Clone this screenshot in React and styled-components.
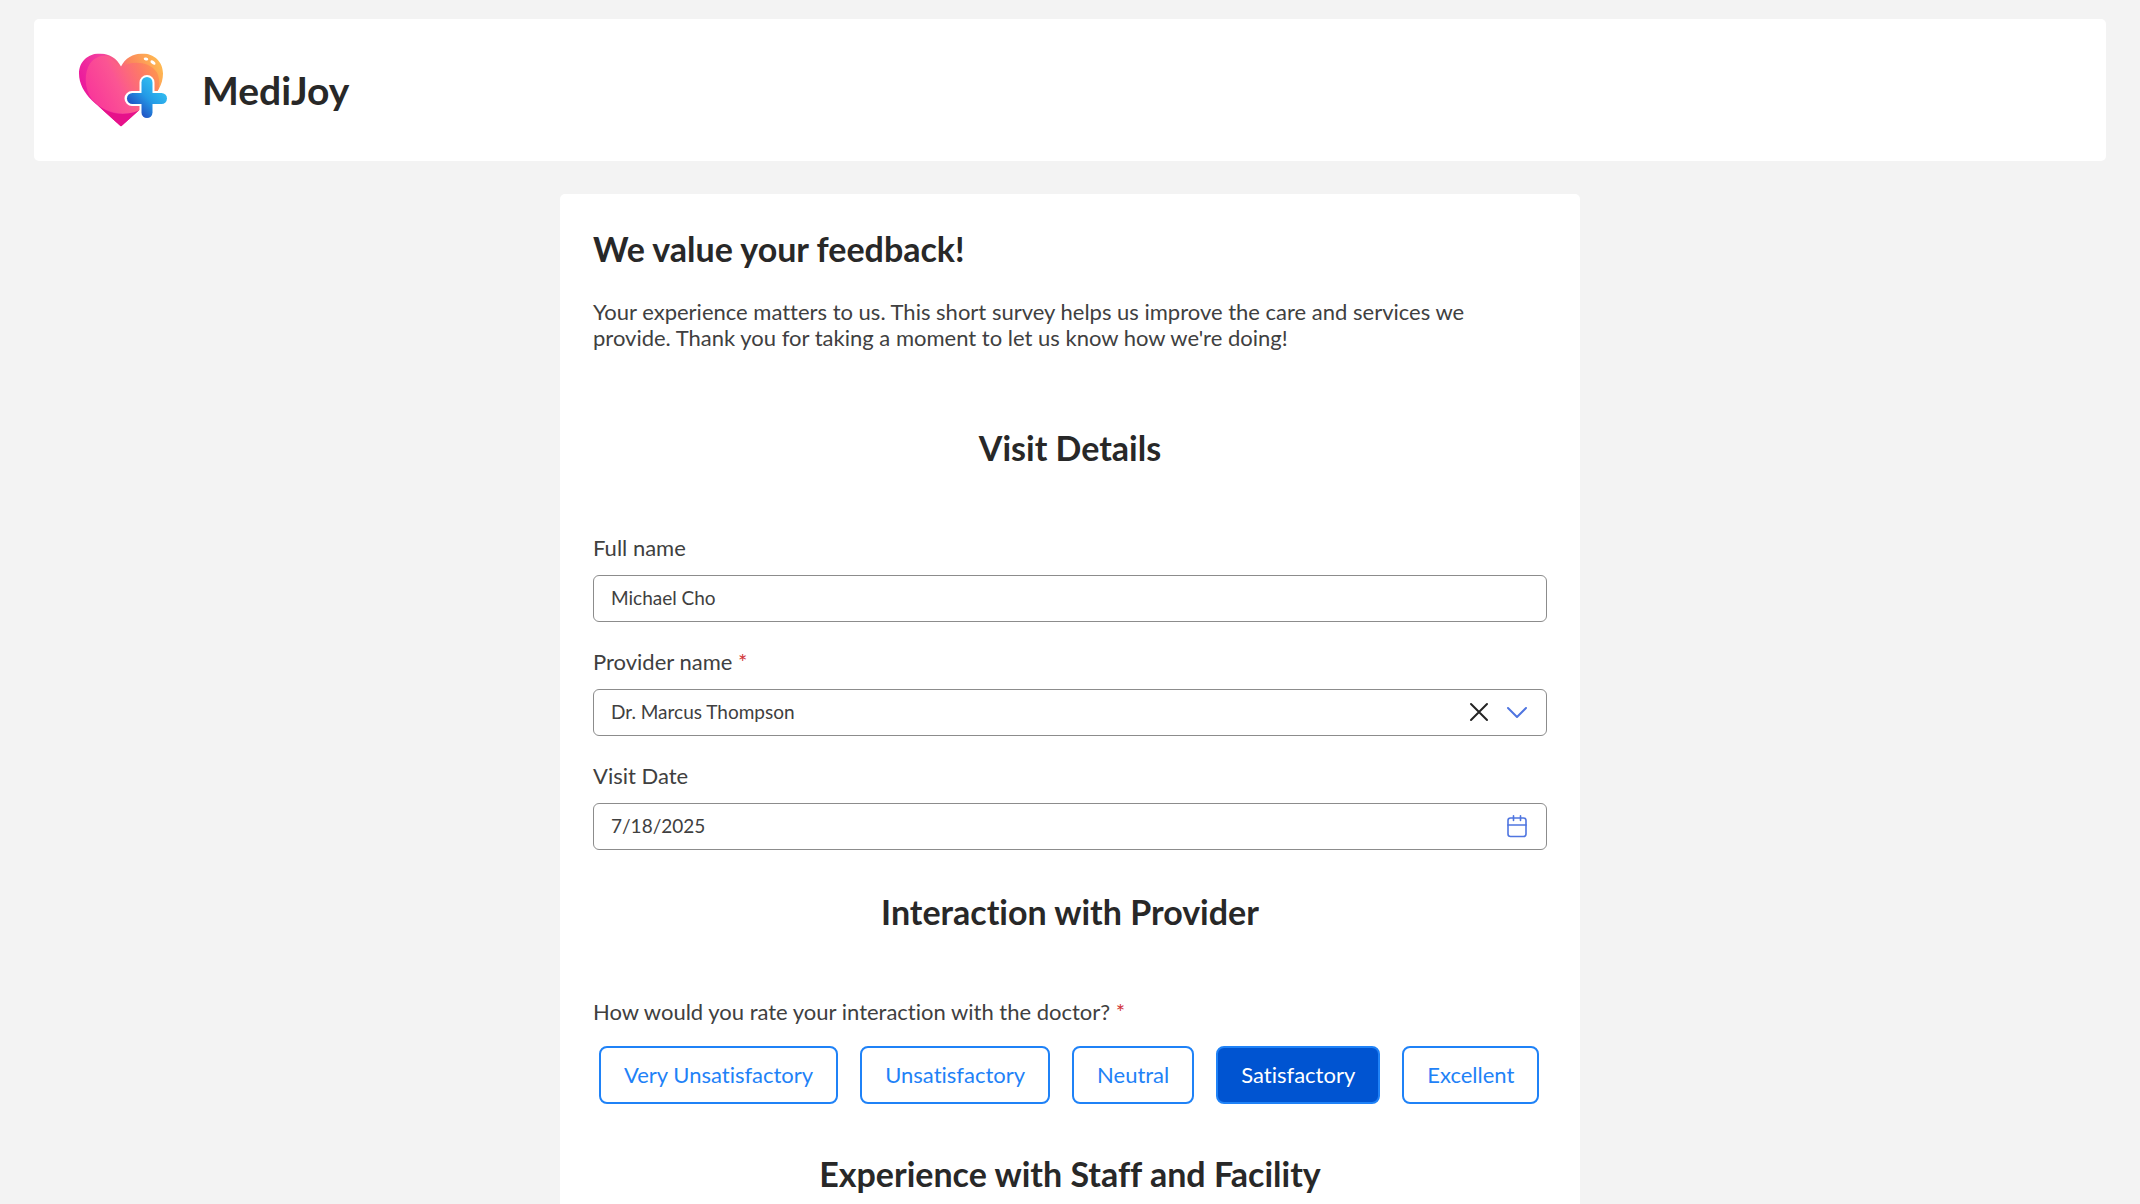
import React, {useState} from "react";
import styled, {createGlobalStyle} from "styled-components";

const GlobalStyle = createGlobalStyle`
  * {
    box-sizing: border-box;
  }

  body {
    margin: 0;
    background: #f3f3f3;
    color: #404040;
    font-family: Lato, "Liberation Sans", sans-serif;
    font-size: 22px;
    font-variant-ligatures: none;
    line-height: 26px;
  }

  button, input, select {
    font-family: inherit;
    font-variant-ligatures: inherit;
  }
`;

const Page = styled.div`
  min-height: 100vh;
  display: flex;
  flex-direction: column;
  padding: 19px 34px 0;
`;

const Header = styled.header`
  display: flex;
  align-items: center;
  gap: 32px;
  padding: 31px 44px;
  margin-bottom: 33px;
  background: #fff;
  border-radius: 5px;
`;

const Brand = styled.h1`
  margin: 0;
  color: #282828;
  font-size: 39px;
  font-weight: 700;
  line-height: 46px;
`;

const Card = styled.main`
  flex: 1;
  width: 100%;
  max-width: 1020px;
  margin: 0 auto;
  padding: 35px 33px 0;
  background: #fff;
  border-radius: 5px 5px 0 0;
`;

const Title = styled.h2`
  margin: 0 0 30px;
  color: #282828;
  font-size: 34px;
  font-weight: 700;
  line-height: 40px;
`;

const Intro = styled.p`
  max-width: 900px;
  margin: 0 0 77px;
`;

const SectionTitle = styled(Title)`
  margin-bottom: 67px;
  text-align: center;
`;

const Fields = styled.div`
  display: flex;
  flex-direction: column;
  gap: 27px;
  margin-bottom: 42px;
`;

const Label = styled.label`
  display: block;
  margin-bottom: 14px;
`;

const Required = styled.span`
  color: #d13438;
`;

const Control = styled.div`
  display: flex;
  align-items: center;
  gap: 14px;
  height: 47px;
  padding: 0 17px 2px;
  border: 1px solid #8c8c8c;
  border-radius: 6px;
`;

const Input = styled.input`
  flex: 1;
  min-width: 0;
  padding: 0;
  border: 0;
  outline: 0;
  background: none;
  color: #404040;
  font-size: 19px;
  line-height: 26px;
`;

const Select = styled(Input).attrs({as: "select"})`
  appearance: none;
`;

const IconButton = styled.button`
  display: flex;
  padding: 0;
  border: 0;
  background: none;
  color: ${({$dark}) => ($dark ? "#242424" : "#4f75e0")};
  cursor: pointer;
`;

const Rating = styled.fieldset`
  min-width: 0;
  margin: 0 0 50px;
  padding: 0;
  border: 0;
`;

const Question = styled.legend`
  padding: 0;
  margin-bottom: 21px;
`;

const Options = styled.div`
  display: flex;
  flex-wrap: wrap;
  gap: 22px;
  padding: 0 6px;
`;

const Option = styled.button`
  height: 58px;
  padding: 0 23px;
  border: 2px solid #1f82f7;
  border-radius: 8px;
  background: ${({$active}) => ($active ? "#0054d1" : "#fff")};
  color: ${({$active}) => ($active ? "#fff" : "#1f82f7")};
  font-size: 22px;
  line-height: 26px;
  cursor: pointer;
`;

const Logo = () => (
    <svg width="92" height="80" viewBox="78 49.5 92 80" aria-hidden="true">
        <defs>
            <linearGradient id="heart" x1="82" y1="100" x2="160" y2="62" gradientUnits="userSpaceOnUse">
                <stop offset="0" stopColor="#f82f9c"/>
                <stop offset=".45" stopColor="#fb5593"/>
                <stop offset=".75" stopColor="#fd7a66"/>
                <stop offset="1" stopColor="#ff9f46"/>
            </linearGradient>
            <linearGradient id="rim" x1="82" y1="100" x2="160" y2="60" gradientUnits="userSpaceOnUse">
                <stop offset="0" stopColor="#e9119b"/>
                <stop offset=".45" stopColor="#f4419f"/>
                <stop offset=".7" stopColor="#fb8a5c"/>
                <stop offset="1" stopColor="#ffbb50"/>
            </linearGradient>
            <linearGradient id="plus" x1="160" y1="82" x2="132" y2="110" gradientUnits="userSpaceOnUse">
                <stop offset="0" stopColor="#35c5f2"/>
                <stop offset=".5" stopColor="#249ae6"/>
                <stop offset="1" stopColor="#2045bd"/>
            </linearGradient>
            <clipPath id="heartShape">
                <path d="M121 126 L92 100 C84 92 79 83 79 73 C79 61 88 53 100 53 C109 53 117 58 121 66 C125 58 133 53 142 53 C154 53 163 61 163 73 C163 84 157 93 150 100 Z"/>
            </clipPath>
        </defs>
        <g clipPath="url(#heartShape)">
            <path fill="url(#rim)" d="M78 50H166V128H78Z"/>
            <path fill="url(#heart)" d="M92 99 C84 88 84 72 90 63 C95 56 103 54 109 56 L121 67 C130 60 149 60 157 72 C161 80 160 94 151 101 C143 111 128 115 114 112 C105 110 97 105 92 99Z"/>
            <path fill="#e6128a" d="M92 99 C103 113 126 119 144 107 L121 128Z"/>
        </g>
        <g fill="none" strokeLinecap="round">
            <path stroke="#fff" strokeWidth="15" d="M147 82V112M132 98H161"/>
            <path stroke="url(#plus)" strokeWidth="11" d="M147 82V112"/>
            <path stroke="url(#plus)" strokeWidth="11" d="M132.5 98H161.5"/>
        </g>
        <g fill="#fff">
            <ellipse cx="146" cy="58.5" rx="2.3" ry="1.4" transform="rotate(10 146 58.5)"/>
            <ellipse cx="153" cy="62" rx="3" ry="1.6" transform="rotate(38 153 62)"/>
        </g>
    </svg>
);

const ClearIcon = () => (
    <svg width="24" height="24" viewBox="0 0 24 24" fill="none" stroke="currentColor" strokeWidth="2" strokeLinecap="round">
        <path d="M4 4L20 20M20 4L4 20"/>
    </svg>
);

const ChevronIcon = () => (
    <svg width="24" height="24" viewBox="0 0 24 24" fill="none" stroke="currentColor" strokeWidth="2" strokeLinecap="round" strokeLinejoin="round">
        <path d="M3 8L12 17L21 8"/>
    </svg>
);

const CalendarIcon = () => (
    <svg width="24" height="24" viewBox="0 0 24 24" fill="none" stroke="currentColor" strokeWidth="1.6" strokeLinecap="round">
        <rect x="3" y="4" width="18" height="18.5" rx="2.5"/>
        <path d="M3 11H21M8.5 1.7V6.5M15.5 1.7V6.5"/>
    </svg>
);

const ratings = ["Very Unsatisfactory", "Unsatisfactory", "Neutral", "Satisfactory", "Excellent"];

const App = () => {
    const [name, setName] = useState("Michael Cho");
    const [provider, setProvider] = useState("Dr. Marcus Thompson");
    const [date, setDate] = useState("7/18/2025");
    const [rating, setRating] = useState("Satisfactory");

    return (
        <Page>
            <GlobalStyle/>
            <Header>
                <Logo/>
                <Brand>MediJoy</Brand>
            </Header>
            <Card>
                <Title>We value your feedback!</Title>
                <Intro>
                    Your experience matters to us. This short survey helps us improve the care and services we
                    provide. Thank you for taking a moment to let us know how we're doing!
                </Intro>

                <SectionTitle>Visit Details</SectionTitle>
                <Fields>
                    <div>
                        <Label htmlFor="name">Full name</Label>
                        <Control>
                            <Input id="name" value={name} onChange={(e) => setName(e.target.value)}/>
                        </Control>
                    </div>
                    <div>
                        <Label htmlFor="provider">Provider name <Required>*</Required></Label>
                        <Control>
                            <Select id="provider" value={provider} onChange={(e) => setProvider(e.target.value)}>
                                <option value=""></option>
                                <option>Dr. Marcus Thompson</option>
                            </Select>
                            <IconButton type="button" $dark aria-label="Clear" onClick={() => setProvider("")}>
                                <ClearIcon/>
                            </IconButton>
                            <IconButton type="button" aria-label="Open">
                                <ChevronIcon/>
                            </IconButton>
                        </Control>
                    </div>
                    <div>
                        <Label htmlFor="date">Visit Date</Label>
                        <Control>
                            <Input id="date" value={date} onChange={(e) => setDate(e.target.value)}/>
                            <IconButton type="button" aria-label="Pick a date">
                                <CalendarIcon/>
                            </IconButton>
                        </Control>
                    </div>
                </Fields>

                <SectionTitle>Interaction with Provider</SectionTitle>
                <Rating>
                    <Question>How would you rate your interaction with the doctor? <Required>*</Required></Question>
                    <Options>
                        {ratings.map((item) => (
                            <Option
                                key={item}
                                type="button"
                                $active={item === rating}
                                aria-pressed={item === rating}
                                onClick={() => setRating(item)}
                            >
                                {item}
                            </Option>
                        ))}
                    </Options>
                </Rating>

                <SectionTitle>Experience with Staff and Facility</SectionTitle>
            </Card>
        </Page>
    );
};

export default App;
